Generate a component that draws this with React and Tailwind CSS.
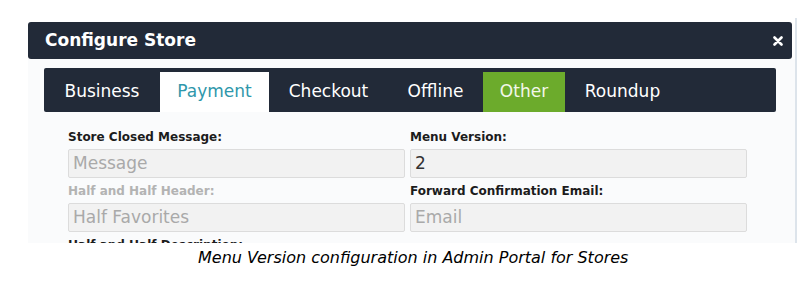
const tabs = [
  { name: 'Business', cls: 'w-[116px] text-white' },
  { name: 'Payment', cls: 'w-[109px] bg-white text-[#2f97ab]' },
  { name: 'Checkout', cls: 'w-[119px] text-white' },
  { name: 'Offline', cls: 'w-[95px] text-white' },
  { name: 'Other', cls: 'w-[82px] bg-[#6cab2c] text-[#f2f7ea]' },
  { name: 'Roundup', cls: 'w-[115px] text-white' },
];

function Field({ label, labelCls, value, valueCls }) {
  return (
    <div className="flex flex-col">
      <div className={`h-[16px] mb-[4px] text-[12px] leading-[16px] font-bold ${labelCls}`}>{label}</div>
      <div className={`h-[29px] mb-[5px] px-[4px] flex items-center bg-[#f2f2f2] border border-[#dcdcdc] rounded-[2px] text-[17px] ${valueCls}`}>
        {value}
      </div>
    </div>
  );
}

export default function App() {
  return (
    <div className="w-[808px] h-[288px] bg-white overflow-hidden font-['DejaVu_Sans',Verdana,sans-serif]">
      <div className="pt-[18px] pl-[28px]">
        <div className="w-[769px] h-[225px] border-r-2 border-[#dde4eb] overflow-hidden">
          <div className="mt-[4px] w-[764px] h-[37px] bg-[#222a38] rounded-[3px] flex items-center justify-between pl-[17px] pr-[9px]">
            <span className="text-white text-[17px] font-bold">Configure Store</span>
            <svg width="10" height="10" viewBox="0 0 10 10" className="mt-[1px]">
              <path d="M1.5 1.5 L8.5 8.5 M8.5 1.5 L1.5 8.5" stroke="#fff" strokeWidth="2.6" strokeLinecap="round" />
            </svg>
          </div>
          <div className="w-[767px] h-[184px] bg-[#fafbfc] pt-[9px] pl-[16px]">
            <div className="w-[732px] h-[44px] bg-[#222a38] rounded-[2px] pt-[4px] flex">
              {tabs.map(t => (
                <div key={t.name} className={`h-[40px] flex items-center justify-center text-[17px] ${t.cls}`}>
                  {t.name}
                </div>
              ))}
            </div>
            <div className="pl-[24px] pt-[17px] grid grid-cols-[337px_337px] gap-x-[5px]">
              <div>
                <Field label="Store Closed Message:" labelCls="text-[#1c1c1c]" value="Message" valueCls="text-[#a9a9a9]" />
                <Field label="Half and Half Header:" labelCls="text-[#b3b3b3]" value="Half Favorites" valueCls="text-[#a9a9a9]" />
                <div className="h-[16px] text-[12px] leading-[16px] font-bold text-[#1c1c1c]">Half and Half Description:</div>
              </div>
              <div>
                <Field label="Menu Version:" labelCls="text-[#1c1c1c]" value="2" valueCls="text-[#333]" />
                <Field label="Forward Confirmation Email:" labelCls="text-[#1c1c1c]" value="Email" valueCls="text-[#a9a9a9]" />
              </div>
            </div>
          </div>
        </div>
      </div>
      <div className="pl-[198px] pt-[5px] text-[16px] italic text-black leading-[20px]">
        Menu Version configuration in Admin Portal for Stores
      </div>
    </div>
  );
}
